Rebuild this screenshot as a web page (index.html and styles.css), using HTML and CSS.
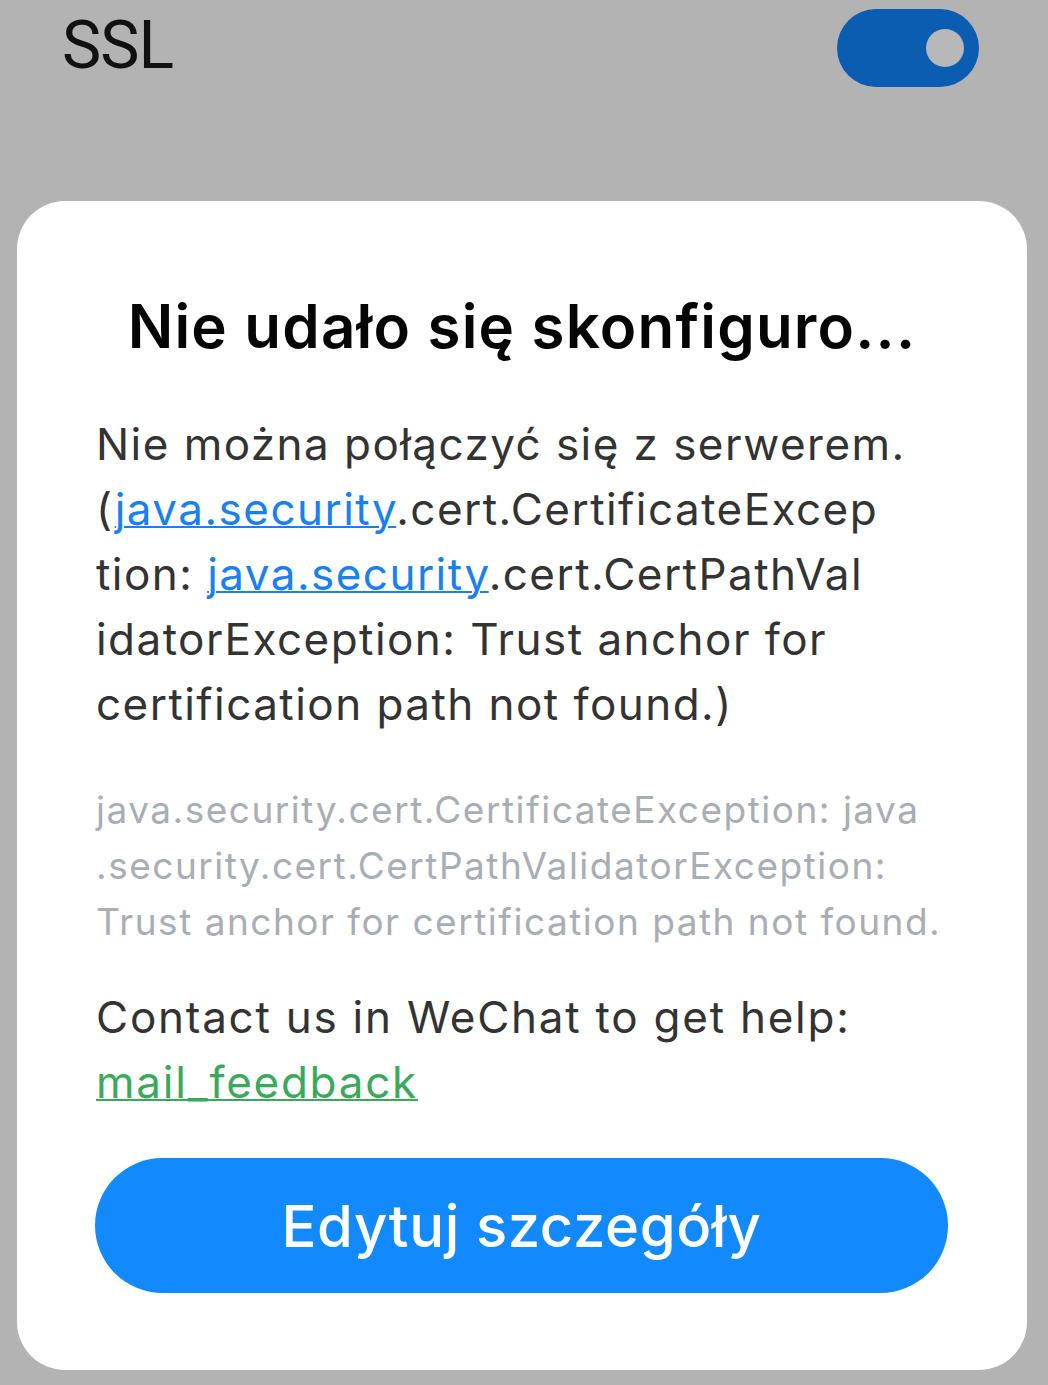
FILE: index.html
```html
<!DOCTYPE html>
<html lang="pl">
<head>
<meta charset="utf-8">
<link rel="stylesheet" href="styles.css">
</head>
<body>
<div class="top">
  <div class="ssl">SSL</div>
  <div class="toggle"><div class="knob"></div></div>
</div>
<div class="card">
  <h1 class="title">Nie udało się skonfiguro...</h1>
  <p class="msg">Nie można połączyć się z serwerem.<br>(<a class="link">java.security</a>.cert.CertificateExcep<br>tion: <a class="link">java.security</a>.cert.CertPathVal<br>idatorException: Trust anchor for<br>certification path not found.)</p>
  <p class="detail">java.security.cert.CertificateException: java<br>.security.cert.CertPathValidatorException:<br>Trust anchor for certification path not found.</p>
  <p class="contact">Contact us in WeChat to get help:<br><a class="green">mail_feedback</a></p>
  <div class="btn">Edytuj szczegóły</div>
</div>
</body>
</html>
```
FILE: styles.css
```css
html, body {
  margin: 0;
  padding: 0;
}
body {
  background: #b3b3b3;
  width: 1048px;
  height: 1385px;
  overflow: hidden;
  font-family: Inter, Roboto, sans-serif;
}
.top {
  height: 201px;
  display: flex;
  justify-content: space-between;
  align-items: flex-start;
  padding: 0 69px 0 62px;
  box-sizing: border-box;
}
.ssl {
  font-family: Roboto, sans-serif;
  font-size: 66px;
  line-height: 1;
  color: #111;
  margin-top: 13px;
  letter-spacing: -1px;
}
.toggle {
  width: 142px;
  height: 78px;
  margin-top: 9px;
  border-radius: 39px;
  background: #0b5db2;
  display: flex;
  align-items: center;
  justify-content: flex-end;
  padding-right: 15px;
  box-sizing: border-box;
}
.knob {
  width: 38px;
  height: 38px;
  border-radius: 50%;
  background: #b6b8ba;
}
.card {
  margin-left: 17px;
  width: 1010px;
  height: 1169px;
  background: #fff;
  border-radius: 48px;
  box-sizing: border-box;
  padding: 85px 79px 0 79px;
}
.title {
  margin: 0 -20px;
  text-align: center;
  font-size: 60px;
  line-height: 80px;
  font-weight: 600;
  letter-spacing: 1.2px;
  color: #050505;
  white-space: nowrap;
}
.msg {
  margin: 46px 0 0;
  font-size: 44px;
  line-height: 65px;
  letter-spacing: 1.45px;
  color: #333;
  white-space: nowrap;
}
.link {
  color: #1a7ff0;
  text-decoration: underline;
  text-decoration-thickness: 2px;
}
.detail {
  margin: 45px 0 0;
  font-size: 37px;
  line-height: 56px;
  letter-spacing: 1.5px;
  color: #a9adb4;
  white-space: nowrap;
}
.contact {
  margin: 35px 0 0;
  font-size: 44px;
  line-height: 65px;
  letter-spacing: 1.75px;
  color: #333;
  white-space: nowrap;
}
.green {
  color: #3aa95c;
  text-decoration: underline;
  text-decoration-thickness: 2px;
}
.btn {
  margin-top: 43px;
  height: 135px;
  border-radius: 68px;
  background: #1289fd;
  color: #fff;
  font-size: 58px;
  font-weight: 500;
  letter-spacing: 0.6px;
  display: flex;
  align-items: center;
  justify-content: center;
  margin-left: -1px;
}
```
